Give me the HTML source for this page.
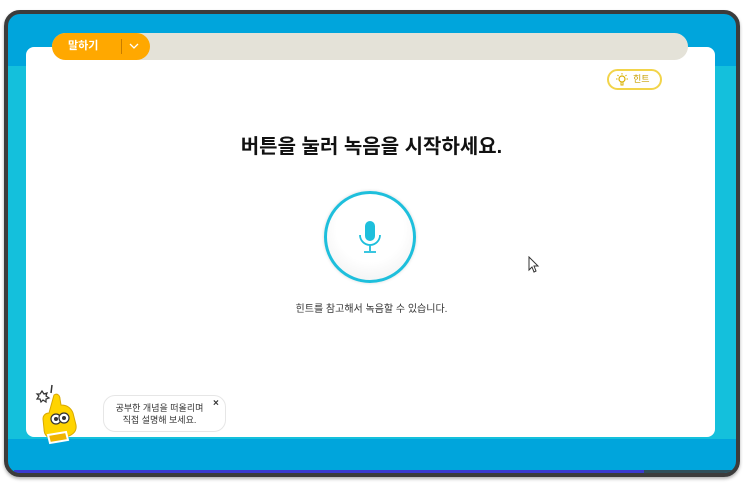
<!DOCTYPE html>
<html><head><meta charset="utf-8"><style>
*{margin:0;padding:0;box-sizing:border-box}
body{width:743px;height:483px;background:#fff;position:relative;overflow:hidden;font-family:"Liberation Sans","Noto Sans CJK KR",sans-serif}
.frame{position:absolute;left:4px;top:10px;width:736px;height:467px;border:4px solid #3c3c3c;border-radius:16px;overflow:hidden;background:linear-gradient(#00a5dc 0,#00a5dc 52px,#14c0dc 52px,#14c0dc 425px,#00a5dc 425px);box-shadow:0 2px 3px rgba(0,0,0,.3)}
.purple{position:absolute;left:6px;bottom:0;width:630px;height:3px;background:#3b3bd0}
.purple2{position:absolute;left:636px;bottom:0;width:90px;height:3px;background:#2f4f5a}
.card{position:absolute;left:26px;top:47px;width:689px;height:390px;background:#fff;border-radius:8px}
.bar{position:absolute;left:52px;top:33px;width:636px;height:27px;background:#e4e2d8;border-radius:14px}
.pill{position:absolute;left:52px;top:33px;width:98px;height:27px;background:#ffa800;border-radius:14px;color:#fff;font-size:11px;font-weight:bold;line-height:27px;padding-left:16px}
.pill .sep{position:absolute;left:69px;top:6px;width:1px;height:15px;background:#c77d00}
.hint{position:absolute;left:607px;top:69px;width:55px;height:21px;border:2px solid #f2d44a;border-radius:11px;font-size:9px;color:#c9a000;line-height:17px;padding-left:24px}
h1{position:absolute;left:0;width:743px;top:130px;text-align:center;font-size:20px;font-weight:bold;color:#111}
.mic{position:absolute;left:324px;top:191px;width:92px;height:92px;border-radius:50%;border:3px solid #1ebfdc;background:radial-gradient(circle at 50% 40%,#fff 50%,#ececec);box-shadow:0 0 3px rgba(0,0,0,.15)}
.sub{position:absolute;left:0;width:743px;top:300px;text-align:center;font-size:10px;color:#333}
.bubble{position:absolute;left:103px;top:395px;width:123px;height:37px;border:1px solid #e6e6e6;border-radius:12px;background:#fff;font-size:9px;color:#333;text-align:center;line-height:12px;padding-top:6px;padding-right:10px}
.x{position:absolute;left:213px;top:398px;font-size:10px;color:#333;font-weight:bold}
</style></head><body>
<div class="frame"><div class="purple"></div><div class="purple2"></div></div>
<div class="card"></div>
<div class="bar"></div>
<div class="pill">말하기<div class="sep"></div>
<svg style="position:absolute;left:77px;top:10px" width="10" height="7"><path d="M1 1 L5 5 L9 1" stroke="#fff" stroke-width="1.3" fill="none"/></svg></div>
<div class="hint"><svg style="position:absolute;left:6px;top:2px" width="14" height="14" viewBox="0 0 14 14"><circle cx="7" cy="6" r="3" fill="none" stroke="#d9b000" stroke-width="1.2"/><path d="M6 9v3h2V9M7 0v1.5M1 6h1.5M11.5 6H13M2.5 2l1 1M11.5 2l-1 1" stroke="#d9b000" stroke-width="1" fill="none"/></svg>힌트</div>
<h1>버튼을 눌러 녹음을 시작하세요.</h1>
<div class="mic"><svg style="position:absolute;left:30px;top:26px" width="26" height="36" viewBox="0 0 26 36"><rect x="8" y="1" width="10" height="20" rx="5" fill="#1ebfdc"/><path d="M3 15a10 10 0 0 0 20 0M13 25v6M7 32h12" stroke="#1ebfdc" stroke-width="1.8" fill="none"/></svg></div>
<div class="sub">힌트를 참고해서 녹음할 수 있습니다.</div>
<svg style="position:absolute;left:528px;top:256px" width="12" height="17" viewBox="0 0 12 17"><path d="M1 1v13l3-3 2 5 2-1-2-5h4z" fill="#fff" stroke="#333" stroke-width="1"/></svg>
<svg style="position:absolute;left:28px;top:383px" width="62" height="64" viewBox="0 0 62 64">
<path d="M14 8l2 3 3-1-1 3 3 2-3 1 0 3-3-2-2 2-1-3-3 0 2-3-2-2 3 0z" fill="none" stroke="#333" stroke-width="1.2"/>
<path d="M24 2l-1 8" stroke="#333" stroke-width="1.5"/>
<path d="M26 12c3-2 6 0 6 4l1 6c6 0 10 3 12 8l3 12c1 6-3 10-10 12l-12 2c-6 0-10-4-10-10l-1-10c0-4 3-6 6-6z" fill="#ffd400" stroke="#d8a800" stroke-width="1"/>
<path d="M20 52l18-3 2 8-18 3z" fill="#f0b400" stroke="#fff" stroke-width="2"/>
<circle cx="28" cy="36" r="5" fill="#fff" stroke="#333" stroke-width="1.2"/><circle cx="36" cy="35" r="5" fill="#fff" stroke="#333" stroke-width="1.2"/>
<circle cx="28" cy="36" r="2" fill="#333"/><circle cx="36" cy="35" r="2" fill="#333"/></svg>
<div class="bubble">공부한 개념을 떠올리며<br>직접 설명해 보세요.</div>
<div class="x">×</div>
</body></html>
